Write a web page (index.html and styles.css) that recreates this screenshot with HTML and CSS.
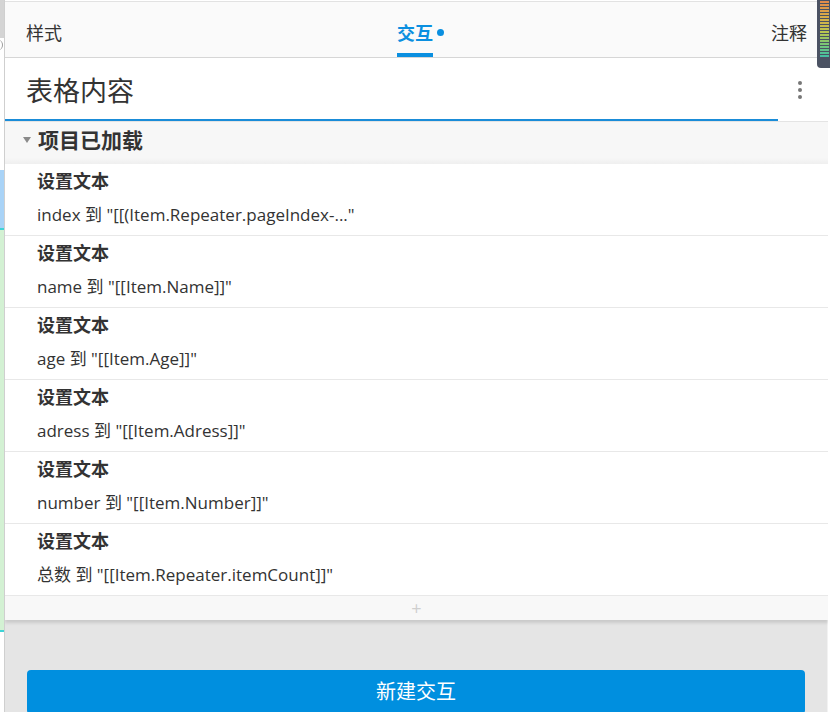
FILE: index.html
```html
<!DOCTYPE html>
<html lang="zh-CN">
<head>
    <meta charset="UTF-8">
    <title>交互</title>
    <link rel="stylesheet" href="styles.css">
</head>
<body>
    <div class="side-strip">
        <div class="strip-top"></div>
        <div class="strip-white"><span class="strip-arc"></span></div>
        <div class="strip-blue"></div>
        <div class="strip-green"></div>
        <div class="strip-bottom"></div>
    </div>

    <div class="panel">
        <div class="tabs">
            <div class="tab">样式</div>
            <div class="tab active">交互<span class="tab-dot"></span></div>
            <div class="tab">注释</div>
        </div>

        <div class="title-bar">
            <div class="title">表格内容</div>
            <div class="more">
                <span></span><span></span><span></span>
            </div>
        </div>

        <div class="event">
            <div class="event-head">
                <span class="caret"></span>
                <span>项目已加载</span>
            </div>
            <div class="action">
                <div class="action-name">设置文本</div>
                <div class="action-detail">index 到 "[[(Item.Repeater.pageIndex-..."</div>
            </div>
            <div class="action">
                <div class="action-name">设置文本</div>
                <div class="action-detail">name 到 "[[Item.Name]]"</div>
            </div>
            <div class="action">
                <div class="action-name">设置文本</div>
                <div class="action-detail">age 到 "[[Item.Age]]"</div>
            </div>
            <div class="action">
                <div class="action-name">设置文本</div>
                <div class="action-detail">adress 到 "[[Item.Adress]]"</div>
            </div>
            <div class="action">
                <div class="action-name">设置文本</div>
                <div class="action-detail">number 到 "[[Item.Number]]"</div>
            </div>
            <div class="action">
                <div class="action-name">设置文本</div>
                <div class="action-detail">总数 到 "[[Item.Repeater.itemCount]]"</div>
            </div>
            <div class="add-row">+</div>
        </div>

        <div class="footer">
            <button class="new-btn">新建交互</button>
        </div>
    </div>

    <div class="right-strip"></div>

    <div class="meter">
        <div class="meter-bars"></div>
    </div>
</body>
</html>
```

FILE: styles.css
```css
html, body {
    height: 100%;
}

body {
    margin: 0;
    display: flex;
    font-family: 'Open Sans', 'Noto Sans CJK SC', sans-serif;
    color: #333;
    background-color: #fff;
    overflow: hidden;
}

/* leftover bits of the neighbouring canvas */
.side-strip {
    width: 4px;
    flex-shrink: 0;
    display: flex;
    flex-direction: column;
    border-right: 1px solid #cfcfcf;
    overflow: hidden;
}

.strip-top {
    height: 38px;
    flex-shrink: 0;
    background-color: #d4d4d4;
}

.strip-white {
    height: 132px;
    flex-shrink: 0;
    background-color: #fff;
    position: relative;
}

.strip-arc {
    position: absolute;
    left: -6px;
    top: 2px;
    width: 8px;
    height: 10px;
    border-right: 1px solid #999;
    border-radius: 50%;
}

.strip-blue {
    height: 58px;
    flex-shrink: 0;
    background-color: #a9d3f7;
    border-bottom: 2px solid #3fd3d6;
}

.strip-green {
    height: 400px;
    flex-shrink: 0;
    background-color: #d3f1d3;
    border-bottom: 2px solid #3fd3d6;
}

.strip-bottom {
    flex: 1;
    background-color: #fff;
}

.right-strip {
    width: 2px;
    flex-shrink: 0;
    background-color: #fff;
}

.panel {
    flex: 1;
    display: flex;
    flex-direction: column;
    min-width: 0;
    overflow: hidden;
}

.panel > div {
    flex-shrink: 0;
}

.tabs {
    height: 55px;
    margin-top: 1px;
    border-top: 1px solid #e2e2e2;
    border-bottom: 1px solid #d6d6d6;
    background-color: #fafafa;
    display: flex;
    justify-content: space-between;
    align-items: stretch;
    padding: 0 21px;
}

.tab {
    font-size: 18px;
    line-height: 1;
    display: flex;
    align-items: center;
    padding-top: 7px;
    color: #333;
    position: relative;
}

.tab.active {
    color: #0a8fe0;
    font-weight: bold;
    padding-left: 8px;
}

.tab.active::after {
    content: "";
    position: absolute;
    left: 8px;
    width: 36px;
    bottom: 0;
    height: 4px;
    background-color: #0a8fe0;
}

.tab-dot {
    width: 7px;
    height: 7px;
    border-radius: 50%;
    background-color: #0a8fe0;
    margin-left: 4px;
    margin-bottom: 2px;
}

.title-bar {
    height: 63px;
    display: flex;
    align-items: center;
    justify-content: space-between;
    padding: 0 26px 0 21px;
    background:
        linear-gradient(#1a8cd8, #1a8cd8) left bottom / 773px 2px no-repeat,
        #fff;
    border-bottom: 1px solid #e4e4e4;
}

.title {
    font-size: 27px;
    color: #333;
}

.more {
    display: flex;
    flex-direction: column;
    gap: 3px;
}

.more span {
    width: 4px;
    height: 4px;
    border-radius: 50%;
    background-color: #777;
}

.event {
    box-shadow: 0 3px 3px rgba(0,0,0,0.12);
    position: relative;
    z-index: 1;
}

.event-head {
    height: 42px;
    box-sizing: border-box;
    padding: 0 0 8px 18px;
    display: flex;
    align-items: center;
    background: linear-gradient(#f7f7f7 85%, #efefef);
    font-size: 21px;
    font-weight: bold;
    color: #333;
}

.caret {
    width: 0;
    height: 0;
    border-left: 4px solid transparent;
    border-right: 4px solid transparent;
    border-top: 6px solid #8a8a8a;
    margin-right: 7px;
    margin-top: 1px;
}

.action {
    height: 71px;
    border-bottom: 1px solid #e8e8e8;
    background-color: #fff;
    padding-left: 32px;
    display: flex;
    flex-direction: column;
}

.action-name {
    font-size: 18px;
    font-weight: bold;
    margin-top: 7px;
    line-height: 20px;
}

.action-detail {
    font-size: 17px;
    margin-top: 13px;
    line-height: 22px;
}

.add-row {
    height: 24px;
    background-color: #f8f8f8;
    text-align: center;
    color: #cfcfcf;
    font-size: 18px;
    line-height: 24px;
}

.panel > .footer {
    flex: 1 0 auto;
    background-color: #e5e5e5;
    padding: 50px 22px 0 22px;
    border-right: 1px solid #f2f2f2;
}

.new-btn {
    display: block;
    width: 100%;
    height: 44px;
    border: none;
    border-radius: 4px;
    background-color: #008fdf;
    color: #fff;
    font-family: 'Open Sans', 'Noto Sans CJK SC', sans-serif;
    font-size: 20px;
    padding: 0 0 3px 0;
}

/* colour meter docked over the top-right corner */
.meter {
    position: absolute;
    top: 0;
    right: 0;
    width: 13px;
    height: 68px;
    background-color: #4b5263;
    border-bottom-left-radius: 4px;
}

.meter-bars {
    margin: 1px 1px 0 3px;
    height: 57px;
    background:
        repeating-linear-gradient(transparent 0, transparent 2px, #4b5263 2px, #4b5263 3px),
        linear-gradient(#e48a4a, #d8b048 30%, #b8c650 55%, #6fc57d 80%, #3fbfa8);
}
```
